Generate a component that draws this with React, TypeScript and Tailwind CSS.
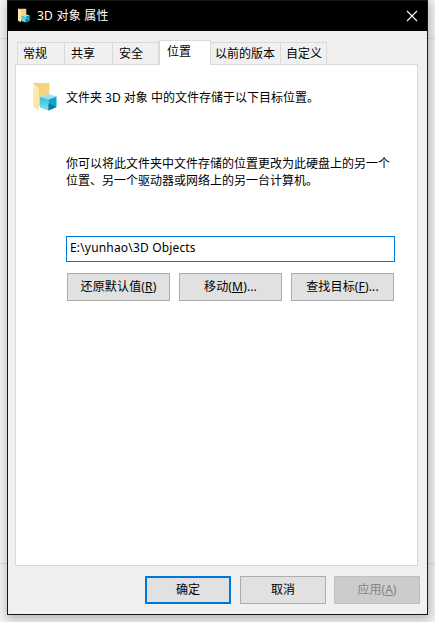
import type { ReactNode } from 'react';

function FolderIcon({ className }: { className: string }) {
  return (
    <svg className={className} viewBox="0 0 24 29">
      <defs>
        <linearGradient id="back" x1="0" y1="0" x2="1" y2="1">
          <stop offset="0" stopColor="#f0cf72" />
          <stop offset="1" stopColor="#f9dc8a" />
        </linearGradient>
        <linearGradient id="front" x1="0" y1="0" x2="1" y2="1">
          <stop offset="0" stopColor="#fff0bd" />
          <stop offset="1" stopColor="#fbe09a" />
        </linearGradient>
        <linearGradient id="side" x1="0" y1="0" x2="0" y2="1">
          <stop offset="0" stopColor="#2fbfe0" />
          <stop offset="1" stopColor="#7fe0ee" />
        </linearGradient>
      </defs>
      <path d="M0 1H16.5V24H0Z" fill="url(#back)" />
      <path d="M0 1L5 5Q6 5.8 6 7.5V28L0 25Z" fill="url(#front)" />
      <path d="M7 15L15.5 12L23.5 14.5L15.5 17.5Z" fill="#9be3f2" />
      <path d="M7 15L15.5 17.5V28.5L7 25.5Z" fill="url(#side)" />
      <path d="M15.5 17.5L23.5 14.5V25L15.5 28.5Z" fill="#0fa6cc" />
      <path d="M15.5 21.5L23.5 25L15.5 28.5Z" fill="#067b9e" />
    </svg>
  );
}

function Button({ children, className }: { children: ReactNode; className: string }) {
  return (
    <button className={`flex h-7 shrink-0 items-center justify-center whitespace-pre pb-px ${className}`}>
      <span>{children}</span>
    </button>
  );
}

const key = 'underline decoration-1 underline-offset-1';
const tab = 'h-[23px] shrink-0 border-t border-r border-[#d9d9d9] pt-[2px] leading-[18px] whitespace-nowrap';

export default function App() {
  return (
    <div className="flex h-[622px] w-[435px] overflow-hidden bg-[#f2f2f2] bg-[linear-gradient(#dddddd,#dddddd),linear-gradient(#dddddd,#dddddd)] bg-[length:100%_1px,100%_1px] bg-[position:0_38px,0_563px] bg-no-repeat pl-[7px] font-['Noto_Sans','Noto_Sans_CJK_SC',sans-serif] text-[12px] text-black">
      <main className="flex h-[615px] w-[421px] flex-col border border-[#171717] bg-[#f0f0f0] shadow-[1px_3px_10px_1px_rgba(0,0,0,0.26)]">
        <header className="flex h-[30px] shrink-0 items-center bg-black pl-[10px] pr-[9px] text-white">
          <FolderIcon className="-mt-px h-[15px] w-[12px]" />
          <h1 className="ml-[7px] grow whitespace-nowrap tracking-[0.25px]">3D 对象 属性</h1>
          <svg className="h-[12px] w-[12px]" viewBox="0 0 12 12" fill="none" stroke="white" strokeWidth="1.1">
            <path d="M1 1L11 11M11 1L1 11" />
          </svg>
        </header>
        <nav className="z-10 -mb-px flex h-[34px] shrink-0 items-end pl-[9px]">
          <div className={`${tab} w-[48px] border-l pl-[5px]`}>常规</div>
          <div className={`${tab} w-[48px] pl-[6px]`}>共享</div>
          <div className={`${tab} w-[46px] pl-[6px]`}>安全</div>
          <div className="h-[25px] w-[52px] shrink-0 border-x border-t border-[#d9d9d9] bg-white pl-[7px] pt-[2px] leading-[18px]">位置</div>
          <div className={`${tab} w-[70px] pl-1`}>以前的版本</div>
          <div className={`${tab} w-[46px] pl-[5px]`}>自定义</div>
        </nav>
        <section className="ml-[7px] flex h-[502px] w-[403px] shrink-0 flex-col border border-[#d9d9d9] bg-white">
          <div className="flex h-[70px] shrink-0 items-start pl-[17px] pt-[17px]">
            <FolderIcon className="h-[29px] w-[24px]" />
            <p className="ml-[9px] mt-[7px] whitespace-nowrap leading-[18px]">文件夹 3D 对象 中的文件存储于以下目标位置。</p>
          </div>
          <p className="ml-[50px] mt-5 h-[81px] whitespace-nowrap leading-[17px]">
            你可以将此文件夹中文件存储的位置更改为此硬盘上的另一个
            <br />
            位置、另一个驱动器或网络上的另一台计算机。
          </p>
          <input
            className="ml-[50px] h-[26px] w-[329px] shrink-0 border border-[#0078d7] bg-white pb-[3px] pl-[3px] tracking-[0.17px] outline-none"
            defaultValue="E:\yunhao\3D Objects"
          />
          <div className="ml-[51px] mt-[11px] flex gap-[9px] tracking-[0.15px]">
            <Button className="w-[103px] border border-[#adadad] bg-[#e1e1e1]">还原默认值(<span className={key}>R</span>)</Button>
            <Button className="w-[103px] border border-[#adadad] bg-[#e1e1e1]">移动(<span className={key}>M</span>)...</Button>
            <Button className="w-[103px] border border-[#adadad] bg-[#e1e1e1]">查找目标(<span className={key}>F</span>)...</Button>
          </div>
        </section>
        <footer className="mt-[10px] flex pl-[137px]">
          <Button className="w-[86px] border-2 border-[#0078d7] bg-[#e1e1e1]">确定</Button>
          <Button className="ml-[9px] w-[86px] border border-[#adadad] bg-[#e1e1e1]">取消</Button>
          <Button className="ml-2 w-[86px] border border-[#bfbfbf] bg-[#cccccc] text-[#838383]">应用(<span className={key}>A</span>)</Button>
        </footer>
      </main>
    </div>
  );
}
